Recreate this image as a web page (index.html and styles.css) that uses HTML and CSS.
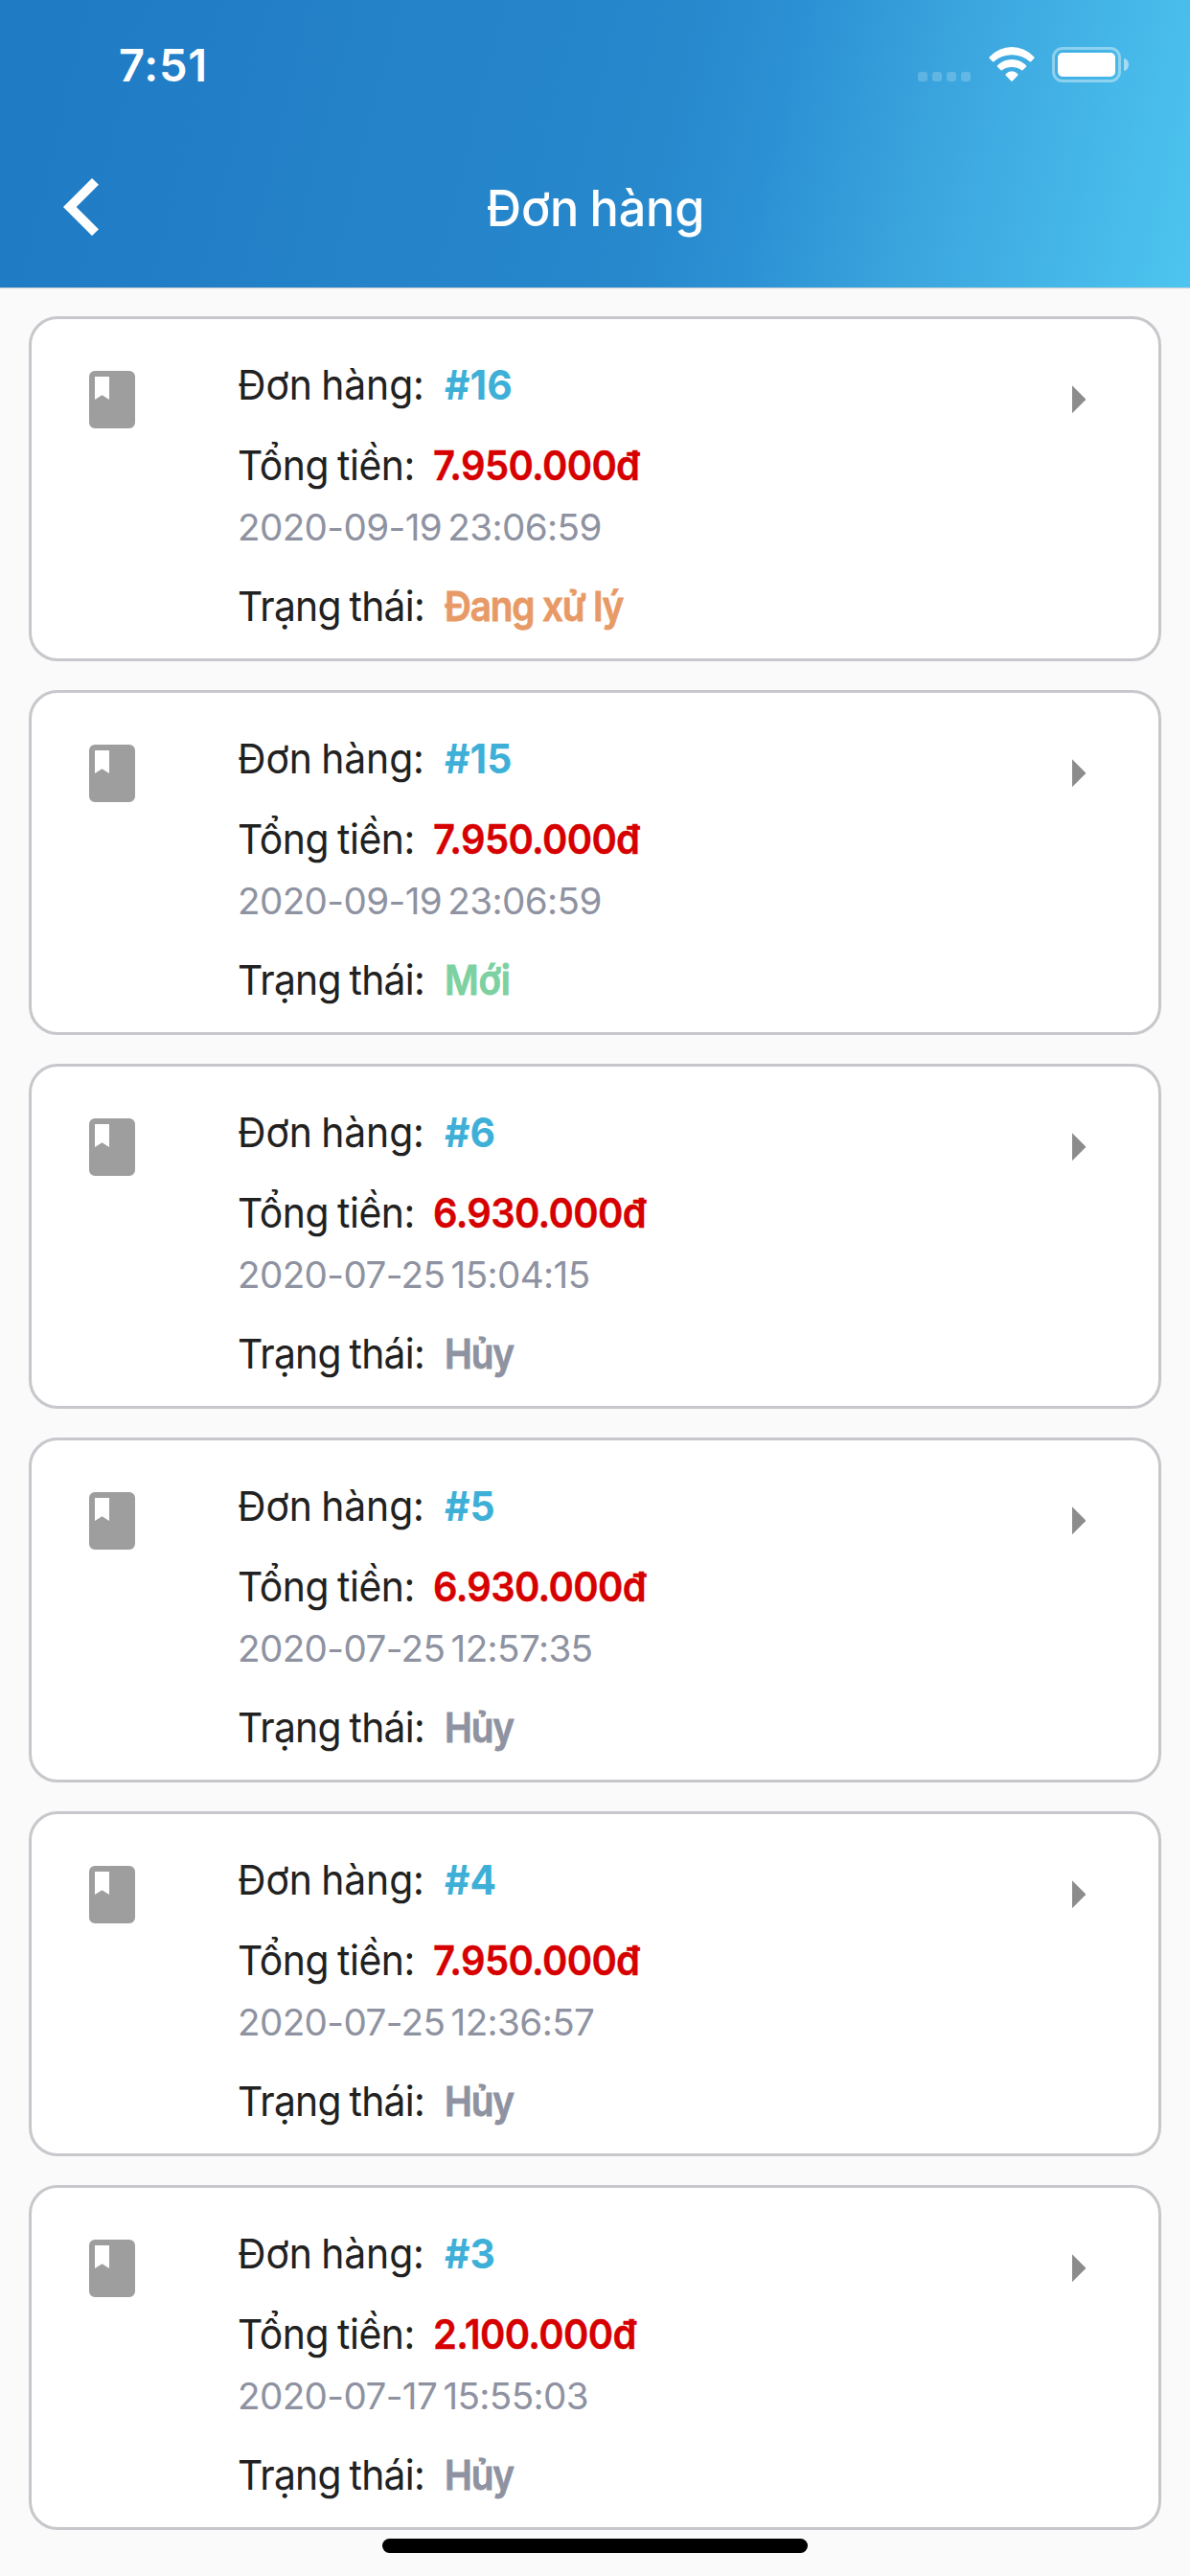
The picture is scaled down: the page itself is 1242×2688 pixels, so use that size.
FILE: index.html
```
<!DOCTYPE html>
<html lang="vi">
<head>
<meta charset="utf-8">
<title>Đơn hàng</title>
<link rel="stylesheet" href="styles.css">
</head>
<body>
<svg class="sprite" aria-hidden="true">
  <symbol id="book" viewBox="0 0 48 60"><path fill-rule="evenodd" d="M6 0H42a6 6 0 0 1 6 6V54a6 6 0 0 1-6 6H6a6 6 0 0 1-6-6V6a6 6 0 0 1 6-6ZM6 6V30L13.5 25.3L21 30V6Z"/></symbol>
  <symbol id="arrow" viewBox="0 0 15 30"><path d="M0 0L15 15L0 30Z"/></symbol>
</svg>
<header class="header">
  <div class="status-bar">
    <span class="time">7:51</span>
    <div class="indicators">
      <div class="signal"><i></i><i></i><i></i><i></i></div>
      <svg class="wifi" viewBox="0 0 48 36"><path d="M.8 12Q0 11.1.9 10.2A31.3 31.3 0 0 1 47.1 10.2Q48 11.1 47.2 12L44 15.2Q43.4 15.8 42.8 15.2A29 29 0 0 0 5.2 15.2Q4.6 15.8 4 15.2Z"/><path d="M9 20.8Q8.2 20 9.2 19A21.3 21.3 0 0 1 38.8 19Q39.8 20 39 20.8L35.4 24.3Q34.8 24.9 34.2 24.3A17.4 17.4 0 0 0 13.8 24.3Q13.2 24.9 12.6 24.3Z"/><path d="M17.8 29.7Q17 28.8 17.9 28A8.2 8.2 0 0 1 30.1 28Q31 28.8 30.2 29.7L24.7 35.4Q24 36 23.3 35.4Z"/></svg>
      <div class="battery"><div class="battery-shell"><div class="battery-level"></div></div><div class="battery-tip"></div></div>
    </div>
  </div>
  <nav class="nav">
    <svg class="back" viewBox="0 0 37 60"><path d="M30 0L37 6.8L13.7 30L37 53.2L30 60L0 30Z"/></svg>
    <h1 class="title"><span>Đơn hàng</span></h1>
  </nav>
</header>
<main class="orders">
  <article class="card">
    <svg class="book"><use href="#book"/></svg>
    <div class="details">
      <p class="row order"><span class="label">Đơn hàng:</span><span class="value">#16</span></p>
      <p class="row total"><span class="label">Tổng tiền:</span><span class="value">7.950.000đ</span></p>
      <p class="date">2020-09-19 23:06:59</p>
      <p class="row status"><span class="label">Trạng thái:</span><span class="value processing">Đang xử lý</span></p>
    </div>
    <svg class="arrow"><use href="#arrow"/></svg>
  </article>
  <article class="card">
    <svg class="book"><use href="#book"/></svg>
    <div class="details">
      <p class="row order"><span class="label">Đơn hàng:</span><span class="value">#15</span></p>
      <p class="row total"><span class="label">Tổng tiền:</span><span class="value">7.950.000đ</span></p>
      <p class="date">2020-09-19 23:06:59</p>
      <p class="row status"><span class="label">Trạng thái:</span><span class="value new">Mới</span></p>
    </div>
    <svg class="arrow"><use href="#arrow"/></svg>
  </article>
  <article class="card">
    <svg class="book"><use href="#book"/></svg>
    <div class="details">
      <p class="row order"><span class="label">Đơn hàng:</span><span class="value">#6</span></p>
      <p class="row total"><span class="label">Tổng tiền:</span><span class="value">6.930.000đ</span></p>
      <p class="date">2020-07-25 15:04:15</p>
      <p class="row status"><span class="label">Trạng thái:</span><span class="value">Hủy</span></p>
    </div>
    <svg class="arrow"><use href="#arrow"/></svg>
  </article>
  <article class="card">
    <svg class="book"><use href="#book"/></svg>
    <div class="details">
      <p class="row order"><span class="label">Đơn hàng:</span><span class="value">#5</span></p>
      <p class="row total"><span class="label">Tổng tiền:</span><span class="value">6.930.000đ</span></p>
      <p class="date">2020-07-25 12:57:35</p>
      <p class="row status"><span class="label">Trạng thái:</span><span class="value">Hủy</span></p>
    </div>
    <svg class="arrow"><use href="#arrow"/></svg>
  </article>
  <article class="card">
    <svg class="book"><use href="#book"/></svg>
    <div class="details">
      <p class="row order"><span class="label">Đơn hàng:</span><span class="value">#4</span></p>
      <p class="row total"><span class="label">Tổng tiền:</span><span class="value">7.950.000đ</span></p>
      <p class="date">2020-07-25 12:36:57</p>
      <p class="row status"><span class="label">Trạng thái:</span><span class="value">Hủy</span></p>
    </div>
    <svg class="arrow"><use href="#arrow"/></svg>
  </article>
  <article class="card">
    <svg class="book"><use href="#book"/></svg>
    <div class="details">
      <p class="row order"><span class="label">Đơn hàng:</span><span class="value">#3</span></p>
      <p class="row total"><span class="label">Tổng tiền:</span><span class="value">2.100.000đ</span></p>
      <p class="date">2020-07-17 15:55:03</p>
      <p class="row status"><span class="label">Trạng thái:</span><span class="value">Hủy</span></p>
    </div>
    <svg class="arrow"><use href="#arrow"/></svg>
  </article>
</main>
<div class="home-indicator"></div>
</body>
</html>
```
FILE: styles.css
```
* { box-sizing: border-box; margin: 0; padding: 0; }

body {
  width: 1242px;
  height: 2688px;
  overflow: hidden;
  background: #fafafa;
  color: #212121;
  font-family: Inter, "Liberation Sans", sans-serif;
}

.sprite { display: none; }

/* Header */
.header {
  height: 300px;
  background: linear-gradient(103.6deg, #1f7ac4 0%, #2788cc 55%, #2c91d4 64%, #3ba5de 77%, #4dc5f0 100%);
  box-shadow: 0 1px 1px rgba(0, 0, 0, .14);
  color: #fff;
  fill: #fff;
}

.status-bar {
  display: flex;
  justify-content: space-between;
  height: 132px;
  padding: 38px 64px 0 124px;
}

.time {
  font-size: 47px;
  font-weight: 600;
  line-height: 60px;
  letter-spacing: .7px;
}

.indicators { display: flex; height: 48px; padding-top: 11px; }

.signal { display: flex; gap: 5px; margin: 26px 18.5px 0 0; }
.signal i { width: 10px; height: 10px; border-radius: 3px; background: rgba(255, 255, 255, .2); }

.wifi { width: 48px; height: 36px; margin-right: 18.5px; }

.battery { display: flex; align-items: center; gap: 3px; height: 37px; }
.battery-shell {
  width: 72px;
  height: 37px;
  padding: 3px;
  border: 3px solid rgba(255, 255, 255, .4);
  border-radius: 11px;
}
.battery-level { height: 25px; border-radius: 5px; background: #fff; }
.battery-tip { width: 5px; height: 13px; border-radius: 0 5px 5px 0 / 0 6.5px 6.5px 0; background: rgba(255, 255, 255, .5); }

.nav {
  display: grid;
  grid-template-columns: 37px 1fr 37px;
  align-items: center;
  height: 168px;
  padding: 0 66px;
}
.back { width: 37px; height: 60px; }
.title {
  padding-top: 2px;
  font-size: 52.5px;
  font-weight: 550;
  line-height: 72px;
  letter-spacing: -.2px;
  word-spacing: -2px;
  text-align: center;
}
.title span { display: inline-block; transform: scaleX(.96); }

/* Order list */
.orders { display: flex; flex-direction: column; gap: 30px; padding: 30px 30px 0; }

.card {
  display: flex;
  align-items: flex-start;
  height: 360px;
  padding: 0 76px 0 60px;
  border: 3px solid #c7c7cc;
  border-radius: 30px;
  background: #fff;
}
.book { width: 48px; height: 60px; margin: 54px 107px 0 0; fill: #9e9e9e; }
.details { flex: 1; padding-top: 38px; }
.arrow { width: 14.5px; height: 29.5px; margin-top: 69px; fill: #8c8c8c; }

.row { display: flex; height: 60px; font-size: 43px; line-height: 60px; white-space: nowrap; }
.label, .value { display: block; transform-origin: 0 50%; }
.label { flex: none; width: 216px; word-spacing: -2px; transform: scaleX(.95); }
.value { font-weight: 600; }

.order .label { letter-spacing: -.1px; }
.order .value { color: #3eb0d8; font-weight: 700; letter-spacing: .1px; transform: scaleX(.95); }

.total { margin-top: 24px; }
.total .label { width: 204px; letter-spacing: -.5px; }
.total .value { color: #d60000; letter-spacing: -.72px; transform: scaleX(.93); -webkit-text-stroke: .4px; }

.date {
  margin-top: 14px;
  color: #8e92a1;
  font-size: 38.6px;
  line-height: 42px;
  letter-spacing: -.6px;
  word-spacing: -4px;
  white-space: nowrap;
}

.status { margin-top: 31px; }
.status .label { letter-spacing: -.8px; }
.status .value { color: #8e92a1; letter-spacing: -1.3px; transform: scaleX(.9); -webkit-text-stroke: .8px; }
.status .processing { color: #e89a66; }
.status .new { color: #7dd1a1; letter-spacing: -.3px; }

.home-indicator { width: 444px; height: 15px; margin: 9px auto 0; border-radius: 7.5px; background: #000; }
```
